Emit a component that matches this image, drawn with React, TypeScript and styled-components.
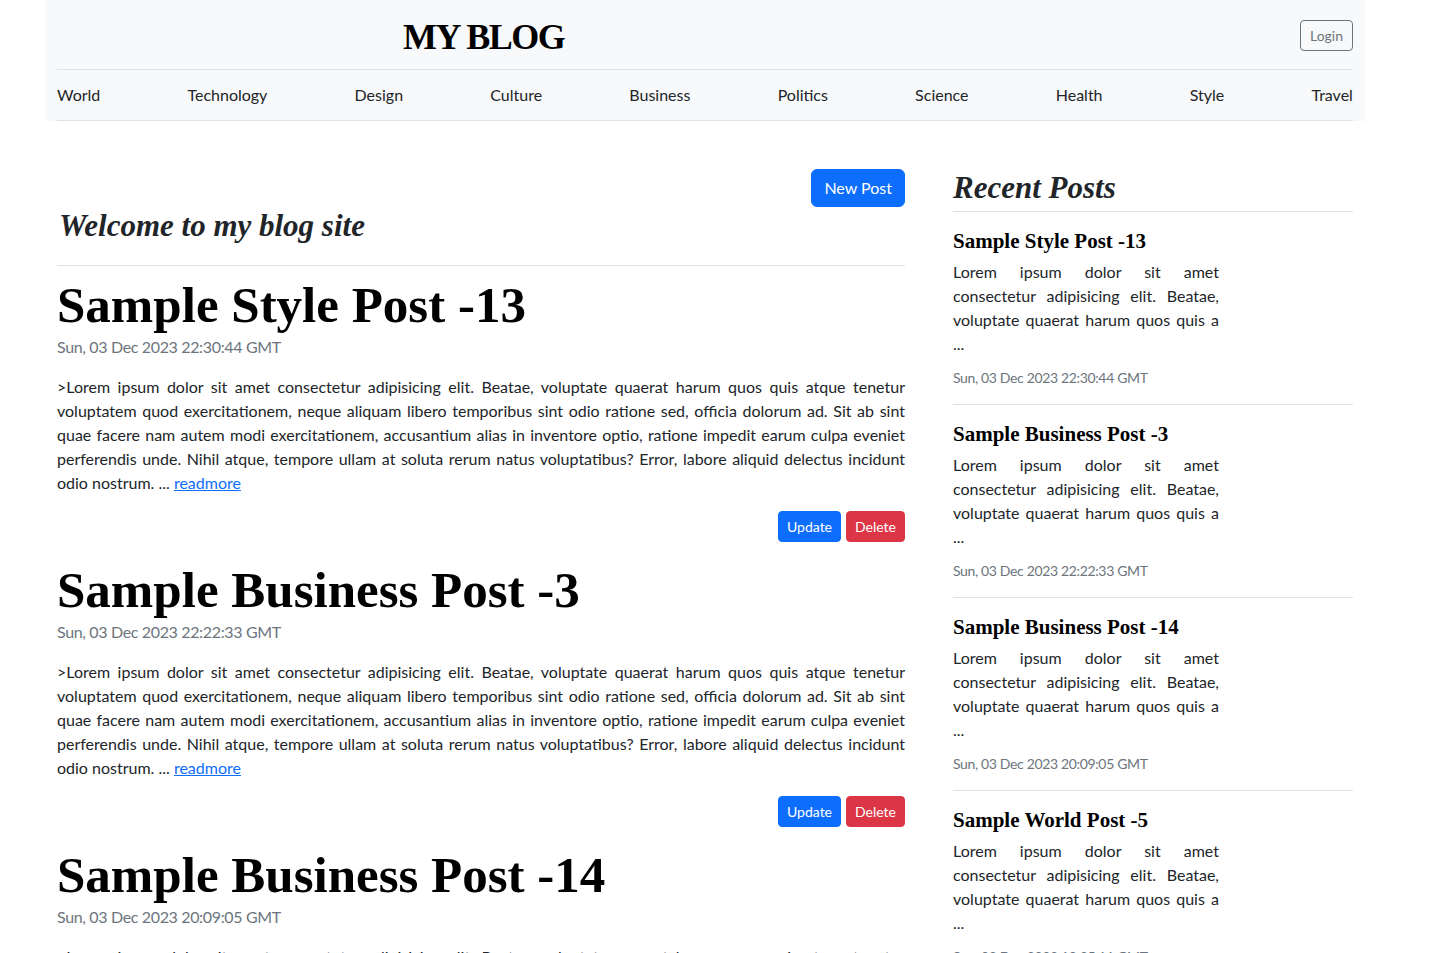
import React from "react";
import styled, { createGlobalStyle } from "styled-components";

const GlobalStyle = createGlobalStyle`
  html, body { margin: 0; padding: 0; background: #ffffff; }
  body {
    font-family: Lato, "Noto Sans", sans-serif;
    font-size: 16px;
    line-height: 1.5;
    color: #212529;
  }
  *, *::before, *::after { box-sizing: border-box; }
`;

const Page = styled.div`
  width: 1320px;
  margin-left: 45px;
`;

const Header = styled.header`
  background: #f8f9fa;
  padding: 0 12px;
`;

const TopRow = styled.div`
  height: 70px;
  display: flex;
  align-items: center;
  border-bottom: 1px solid #dee2e6;
`;

const Logo = styled.a`
  margin-left: 346px;
  font-family: "Liberation Serif", "Times New Roman", serif;
  font-weight: 700;
  font-size: 36px;
  letter-spacing: -1.5px;
  color: #000;
  text-decoration: none;
  line-height: 1;
  padding-top: 4px;
`;

const OutlineButton = styled.button`
  margin-left: auto;
  margin-top: 2px;
  height: 31px;
  padding: 0 9px;
  font-family: inherit;
  font-size: 14px;
  color: #6c757d;
  background: transparent;
  border: 1px solid #6c757d;
  border-radius: 4px;
`;

const Nav = styled.nav`
  height: 51px;
  display: flex;
  align-items: center;
  justify-content: space-between;
  border-bottom: 1px solid #dee2e6;
`;

const NavLink = styled.a`
  color: #212529;
  text-decoration: none;
  font-size: 16px;
`;

const Content = styled.main`
  margin-top: 48px;
  padding: 0 12px;
  display: flex;
  gap: 48px;
  align-items: flex-start;
`;

const MainColumn = styled.section`
  width: 848px;
  flex: none;
`;

const Sidebar = styled.aside`
  width: 400px;
  flex: none;
`;

const ButtonRow = styled.div<{ $top?: number }>`
  display: flex;
  justify-content: flex-end;
  gap: 5px;
  margin-top: ${(p) => p.$top ?? 0}px;
`;

const Button = styled.button<{ $variant: "primary" | "danger"; $size?: "sm" | "md" }>`
  font-family: inherit;
  color: #fff;
  background: ${(p) => (p.$variant === "primary" ? "#0d6efd" : "#dc3545")};
  border: 1px solid ${(p) => (p.$variant === "primary" ? "#0d6efd" : "#dc3545")};
  border-radius: ${(p) => (p.$size === "sm" ? 4 : 6)}px;
  font-size: ${(p) => (p.$size === "sm" ? 14 : 16)}px;
  height: ${(p) => (p.$size === "sm" ? 31 : 38)}px;
  padding: ${(p) => (p.$size === "sm" ? "0 8px" : "0 12px")};
  line-height: 1;
`;

const SectionHeading = styled.h3<{ $pad: number }>`
  margin: 0;
  font-family: "Liberation Serif", "Times New Roman", serif;
  font-style: italic;
  font-weight: 700;
  font-size: 31px;
  line-height: 37px;
  color: #212529;
  padding-bottom: ${(p) => p.$pad}px;
  border-bottom: 1px solid #dee2e6;
`;

const WelcomeHeading = styled(SectionHeading)`
  padding-left: 2px;
`;

const Post = styled.article`
  padding: 9px 0 9px;
`;

const PostTitle = styled.h2`
  margin: 0;
  font-family: "Liberation Serif", "Times New Roman", serif;
  font-weight: 700;
  font-size: 51px;
  line-height: 60px;
  color: #000;
`;

const DateText = styled.p<{ $small?: boolean }>`
  margin: 0;
  color: #6c757d;
  font-size: ${(p) => (p.$small ? 14 : 16)}px;
  line-height: ${(p) => (p.$small ? 21 : 24)}px;
  letter-spacing: -0.35px;
`;

const Excerpt = styled.div<{ $top: number }>`
  margin-top: ${(p) => p.$top}px;
  font-size: 16px;
  line-height: 24px;
`;

const Line = styled.span<{ $last?: boolean }>`
  display: block;
  text-align: justify;
  text-align-last: ${(p) => (p.$last ? "left" : "justify")};
`;

const ReadMore = styled.a`
  color: #0d6efd;
  text-decoration: underline;
`;

const RecentItem = styled.div`
  padding: 17px 0 16px;
  border-bottom: 1px solid #dee2e6;
`;

const RecentTitle = styled.h4`
  margin: 0;
  font-family: "Liberation Serif", "Times New Roman", serif;
  font-weight: 700;
  font-size: 21px;
  line-height: 25px;
  color: #000;
`;

const RecentText = styled.div`
  width: 266px;
  margin: 6px 0 11px;
  line-height: 24px;
`;

const navItems = ["World", "Technology", "Design", "Culture", "Business", "Politics", "Science", "Health", "Style", "Travel"];

const excerptLines = [
  ">Lorem ipsum dolor sit amet consectetur adipisicing elit. Beatae, voluptate quaerat harum quos quis atque tenetur",
  "voluptatem quod exercitationem, neque aliquam libero temporibus sint odio ratione sed, officia dolorum ad. Sit ab sint",
  "quae facere nam autem modi exercitationem, accusantium alias in inventore optio, ratione impedit earum culpa eveniet",
  "perferendis unde. Nihil atque, tempore ullam at soluta rerum natus voluptatibus? Error, labore aliquid delectus incidunt",
];

const posts = [
  { title: "Sample Style Post -13", date: "Sun, 03 Dec 2023 22:30:44 GMT" },
  { title: "Sample Business Post -3", date: "Sun, 03 Dec 2023 22:22:33 GMT" },
  { title: "Sample Business Post -14", date: "Sun, 03 Dec 2023 20:09:05 GMT" },
];

const recent = [
  { title: "Sample Style Post -13", date: "Sun, 03 Dec 2023 22:30:44 GMT" },
  { title: "Sample Business Post -3", date: "Sun, 03 Dec 2023 22:22:33 GMT" },
  { title: "Sample Business Post -14", date: "Sun, 03 Dec 2023 20:09:05 GMT" },
  { title: "Sample World Post -5", date: "Sun, 03 Dec 2023 19:35:11 GMT" },
];

const recentLines = ["Lorem ipsum dolor sit amet", "consectetur adipisicing elit. Beatae,", "voluptate quaerat harum quos quis a"];

export default function App() {
  return (
    <>
      <GlobalStyle />
      <Page>
        <Header>
          <TopRow>
            <Logo href="#">MY BLOG</Logo>
            <OutlineButton>Login</OutlineButton>
          </TopRow>
          <Nav>
            {navItems.map((n) => (
              <NavLink key={n} href="#">
                {n}
              </NavLink>
            ))}
          </Nav>
        </Header>
        <Content>
          <MainColumn>
            <ButtonRow>
              <Button $variant="primary">New Post</Button>
            </ButtonRow>
            <WelcomeHeading $pad={21}>Welcome to my blog site</WelcomeHeading>
            {posts.map((p) => (
              <Post key={p.title}>
                <PostTitle>{p.title}</PostTitle>
                <DateText>{p.date}</DateText>
                <Excerpt $top={16}>
                  {excerptLines.map((l) => (
                    <Line key={l}>{l}</Line>
                  ))}
                  <Line $last>
                    odio nostrum. ... <ReadMore href="#">readmore</ReadMore>
                  </Line>
                </Excerpt>
                <ButtonRow $top={16}>
                  <Button $variant="primary" $size="sm">Update</Button>
                  <Button $variant="danger" $size="sm">Delete</Button>
                </ButtonRow>
              </Post>
            ))}
          </MainColumn>
          <Sidebar>
            <SectionHeading $pad={5}>Recent Posts</SectionHeading>
            {recent.map((r) => (
              <RecentItem key={r.title}>
                <RecentTitle>{r.title}</RecentTitle>
                <RecentText>
                  {recentLines.map((l) => (
                    <Line key={l}>{l}</Line>
                  ))}
                  <Line $last>...</Line>
                </RecentText>
                <DateText $small>{r.date}</DateText>
              </RecentItem>
            ))}
          </Sidebar>
        </Content>
      </Page>
    </>
  );
}
